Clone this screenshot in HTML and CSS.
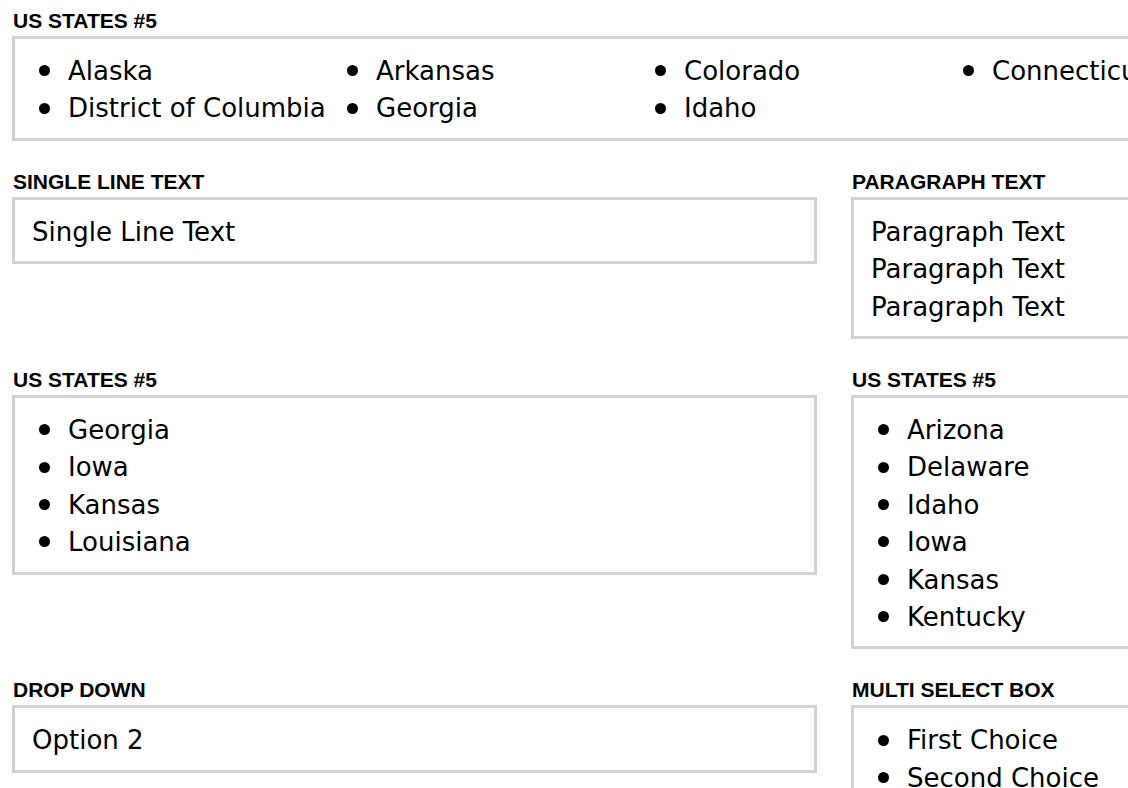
FILE: index.html
```html
<!DOCTYPE html>
<html lang="en">
<head>
<meta charset="utf-8">
<title>Form fields</title>
<link rel="stylesheet" href="styles.css">
</head>
<body>
<div class="page">
  <div class="field field-wide">
    <div class="label">US States #5</div>
    <ul class="box list list-cols">
      <li>Alaska</li>
      <li>Arkansas</li>
      <li>Colorado</li>
      <li>Connecticut</li>
      <li>District of Columbia</li>
      <li>Georgia</li>
      <li>Idaho</li>
    </ul>
  </div>

  <div class="field">
    <div class="label">Single Line Text</div>
    <div class="box">Single Line Text</div>
  </div>
  <div class="field">
    <div class="label">Paragraph Text</div>
    <div class="box">Paragraph Text<br>Paragraph Text<br>Paragraph Text</div>
  </div>

  <div class="field">
    <div class="label">US States #5</div>
    <ul class="box list">
      <li>Georgia</li>
      <li>Iowa</li>
      <li>Kansas</li>
      <li>Louisiana</li>
    </ul>
  </div>
  <div class="field">
    <div class="label">US States #5</div>
    <ul class="box list">
      <li>Arizona</li>
      <li>Delaware</li>
      <li>Idaho</li>
      <li>Iowa</li>
      <li>Kansas</li>
      <li>Kentucky</li>
    </ul>
  </div>

  <div class="field">
    <div class="label">Drop Down</div>
    <div class="box">Option 2</div>
  </div>
  <div class="field">
    <div class="label">Multi Select Box</div>
    <ul class="box list">
      <li>First Choice</li>
      <li>Second Choice</li>
      <li>Third Choice</li>
    </ul>
  </div>
</div>
</body>
</html>
```

FILE: styles.css
```css
html, body {
  margin: 0;
  padding: 0;
  overflow: hidden;
  background: #ffffff;
}

body {
  font-family: "DejaVu Sans", "Liberation Sans", sans-serif;
  color: #000000;
}

.page {
  display: grid;
  grid-template-columns: 805px 805px;
  column-gap: 34px;
  row-gap: 29px;
  align-items: start;
  padding: 9px 12px;
  width: 1644px;
}

.field-wide {
  grid-column: 1 / span 2;
}

.label {
  font-family: "Liberation Sans", Arial, sans-serif;
  font-weight: bold;
  font-size: 21px;
  line-height: 24px;
  text-transform: uppercase;
  margin-bottom: 3px;
  padding-left: 1px;
}

.box {
  border: 3px solid #d2d2d2;
  padding: 14px 16px 10px 17px;
  font-size: 26px;
  line-height: 37.4px;
  margin: 0;
}

.list {
  list-style: none;
  padding-left: 16px;
}

.list li {
  display: flex;
  align-items: center;
  white-space: nowrap;
}

.list li::before {
  content: "";
  flex: none;
  width: 11px;
  height: 11px;
  border-radius: 50%;
  background: #000000;
  margin-left: 8px;
  margin-right: 18px;
  position: relative;
  top: -1px;
}

.list-cols {
  display: grid;
  grid-template-columns: repeat(4, 308px);
}
```
